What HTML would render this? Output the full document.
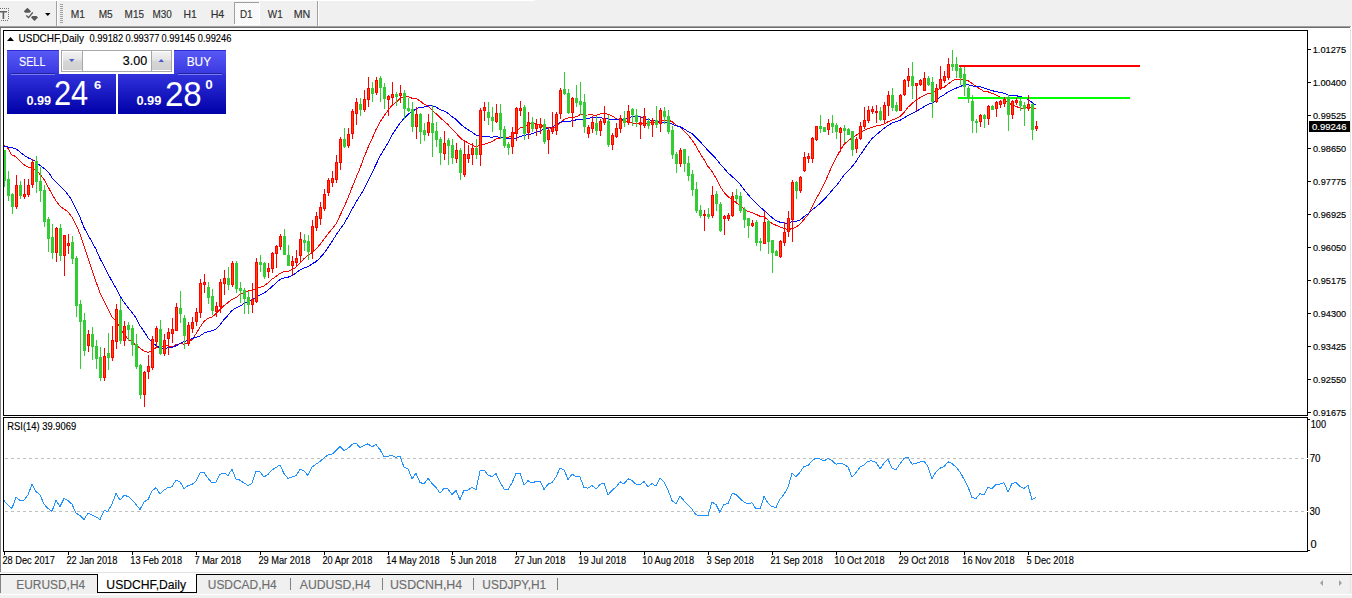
<!DOCTYPE html>
<html><head><meta charset="utf-8"><style>
html,body{margin:0;padding:0;width:1352px;height:598px;overflow:hidden;background:#fff}
svg{position:absolute;left:0;top:0;display:block}
text{font-family:"Liberation Sans",sans-serif}
</style></head><body>
<svg width="1352" height="598" viewBox="0 0 1352 598">
<defs>
<linearGradient id="tabg" x1="0" y1="0" x2="0" y2="1"><stop offset="0" stop-color="#5a5af7"/><stop offset="1" stop-color="#3838e0"/></linearGradient>
<linearGradient id="pang" x1="0" y1="0" x2="0" y2="1"><stop offset="0" stop-color="#3232dc"/><stop offset="1" stop-color="#0000a8"/></linearGradient>
<linearGradient id="btng" x1="0" y1="0" x2="0" y2="1"><stop offset="0" stop-color="#f2f2f2"/><stop offset="0.45" stop-color="#e4e4e4"/><stop offset="0.5" stop-color="#d6d6d6"/><stop offset="1" stop-color="#d0d0d0"/></linearGradient>
<clipPath id="mainclip"><rect x="4" y="31" width="1303" height="384"/></clipPath><clipPath id="rsiclip"><rect x="4" y="418" width="1303" height="133"/></clipPath>
<pattern id="chk" x="0" y="0" width="2" height="2" patternUnits="userSpaceOnUse"><rect width="2" height="2" fill="#f4f4f4"/><rect width="1" height="1" fill="#ffffff"/><rect x="1" y="1" width="1" height="1" fill="#ffffff"/></pattern>
</defs>

<g shape-rendering="crispEdges">
<rect x="0" y="0" width="1352" height="26" fill="#f0f0f0"/>
<rect x="0" y="0" width="535" height="1" fill="#ffffff"/>
<rect x="0" y="26" width="1351" height="1" fill="#a0a0a0"/>
<rect x="0" y="27" width="1350" height="1" fill="#6c6c6c"/>
<rect x="56" y="1" width="1" height="25" fill="#a0a0a0"/><rect x="57" y="1" width="1" height="25" fill="#ffffff"/>
<rect x="317" y="1" width="1" height="25" fill="#a0a0a0"/><rect x="318" y="1" width="1" height="25" fill="#ffffff"/>
<rect x="60" y="4" width="3" height="1" fill="#a0a0a0"/>
<rect x="60" y="6" width="3" height="1" fill="#a0a0a0"/>
<rect x="60" y="8" width="3" height="1" fill="#a0a0a0"/>
<rect x="60" y="10" width="3" height="1" fill="#a0a0a0"/>
<rect x="60" y="12" width="3" height="1" fill="#a0a0a0"/>
<rect x="60" y="14" width="3" height="1" fill="#a0a0a0"/>
<rect x="60" y="16" width="3" height="1" fill="#a0a0a0"/>
<rect x="60" y="18" width="3" height="1" fill="#a0a0a0"/>
<rect x="60" y="20" width="3" height="1" fill="#a0a0a0"/>
<rect x="60" y="22" width="3" height="1" fill="#a0a0a0"/>
<rect x="234" y="2" width="26" height="23" fill="#ffffff"/>
<rect x="235" y="3" width="24" height="21" fill="url(#chk)"/>
<rect x="234" y="2" width="25" height="1" fill="#a0a0a0"/><rect x="234" y="2" width="1" height="22" fill="#a0a0a0"/>
<rect x="0" y="8" width="1" height="1" fill="#707070"/>
<rect x="2" y="8" width="1" height="1" fill="#707070"/>
<rect x="4" y="8" width="1" height="1" fill="#707070"/>
<rect x="6" y="8" width="1" height="1" fill="#707070"/>
<rect x="8" y="8" width="1" height="1" fill="#707070"/>
<rect x="1" y="20" width="1" height="1" fill="#707070"/>
<rect x="3" y="20" width="1" height="1" fill="#707070"/>
<rect x="5" y="20" width="1" height="1" fill="#707070"/>
<rect x="7" y="20" width="1" height="1" fill="#707070"/>
<rect x="8" y="10" width="1" height="1" fill="#707070"/>
<rect x="8" y="12" width="1" height="1" fill="#707070"/>
<rect x="8" y="14" width="1" height="1" fill="#707070"/>
<rect x="8" y="16" width="1" height="1" fill="#707070"/>
<rect x="8" y="18" width="1" height="1" fill="#707070"/>
</g>
<path d="M0 11h7v1.6H4.2V19H2.6v-6.4H0z" fill="#606060"/>
<path d="M23.8 11.2 L27.4 7.8 L31 11.2 L29.6 12.7 H25.2Z" fill="#585858"/>
<path d="M31 17.6 L32.4 16 H36.5 L38 17.6 L34.5 21 Z" fill="#585858"/>
<path d="M26.3 15.5 L28.6 17.6 L32.8 12.4" stroke="#585858" stroke-width="1.4" fill="none"/>
<path d="M45 13 H50.5 L47.75 16 Z" fill="#000"/>
<text transform="translate(70.78,18.10) scale(0.9724,1)" font-size="10.50" stroke="#303030" stroke-width="0.15" fill="#303030" >M1</text>
<text transform="translate(98.69,18.10) scale(0.9648,1)" font-size="10.50" stroke="#303030" stroke-width="0.15" fill="#303030" >M5</text>
<text transform="translate(124.60,18.10) scale(0.9473,1)" font-size="10.50" stroke="#303030" stroke-width="0.15" fill="#303030" >M15</text>
<text transform="translate(152.50,18.10) scale(0.9473,1)" font-size="10.50" stroke="#303030" stroke-width="0.15" fill="#303030" >M30</text>
<text transform="translate(183.47,18.10) scale(0.9916,1)" font-size="10.50" stroke="#303030" stroke-width="0.15" fill="#303030" >H1</text>
<text transform="translate(210.65,18.10) scale(1.0153,1)" font-size="10.50" stroke="#303030" stroke-width="0.15" fill="#303030" >H4</text>
<text transform="translate(239.91,18.10) scale(0.9420,1)" font-size="10.50" stroke="#303030" stroke-width="0.15" fill="#303030" >D1</text>
<text transform="translate(267.80,18.10) scale(0.9495,1)" font-size="10.50" stroke="#303030" stroke-width="0.15" fill="#303030" >W1</text>
<text transform="translate(293.64,18.10) scale(1.0179,1)" font-size="10.50" stroke="#303030" stroke-width="0.15" fill="#303030" >MN</text>
<g shape-rendering="crispEdges">
<rect x="0" y="28" width="1" height="544" fill="#828282"/>
<rect x="1350" y="28" width="1" height="545" fill="#e3e3e3"/>
<rect x="3.5" y="30.5" width="1304" height="385" fill="none" stroke="#000" stroke-width="1"/>
<rect x="3.5" y="417.5" width="1304" height="134" fill="none" stroke="#000" stroke-width="1"/>
<rect x="1308" y="49" width="3" height="1" fill="#000"/>
<rect x="1308" y="82" width="3" height="1" fill="#000"/>
<rect x="1308" y="115" width="3" height="1" fill="#000"/>
<rect x="1308" y="148" width="3" height="1" fill="#000"/>
<rect x="1308" y="181" width="3" height="1" fill="#000"/>
<rect x="1308" y="214" width="3" height="1" fill="#000"/>
<rect x="1308" y="247" width="3" height="1" fill="#000"/>
<rect x="1308" y="280" width="3" height="1" fill="#000"/>
<rect x="1308" y="313" width="3" height="1" fill="#000"/>
<rect x="1308" y="346" width="3" height="1" fill="#000"/>
<rect x="1308" y="379" width="3" height="1" fill="#000"/>
<rect x="1308" y="412" width="3" height="1" fill="#000"/>
</g>
<text transform="translate(1312.65,53.10) scale(0.9638,1)" font-size="9.64" stroke="#000" stroke-width="0.15" fill="#000" >1.01275</text>
<text transform="translate(1312.65,86.10) scale(0.9638,1)" font-size="9.64" stroke="#000" stroke-width="0.15" fill="#000" >1.00400</text>
<text transform="translate(1313.02,119.10) scale(0.9530,1)" font-size="9.64" stroke="#000" stroke-width="0.15" fill="#000" >0.99525</text>
<text transform="translate(1313.02,152.10) scale(0.9530,1)" font-size="9.64" stroke="#000" stroke-width="0.15" fill="#000" >0.98650</text>
<text transform="translate(1313.02,185.10) scale(0.9530,1)" font-size="9.64" stroke="#000" stroke-width="0.15" fill="#000" >0.97775</text>
<text transform="translate(1313.02,218.10) scale(0.9530,1)" font-size="9.64" stroke="#000" stroke-width="0.15" fill="#000" >0.96925</text>
<text transform="translate(1313.02,251.10) scale(0.9530,1)" font-size="9.64" stroke="#000" stroke-width="0.15" fill="#000" >0.96050</text>
<text transform="translate(1313.02,284.10) scale(0.9530,1)" font-size="9.64" stroke="#000" stroke-width="0.15" fill="#000" >0.95175</text>
<text transform="translate(1313.02,317.10) scale(0.9530,1)" font-size="9.64" stroke="#000" stroke-width="0.15" fill="#000" >0.94300</text>
<text transform="translate(1313.02,350.10) scale(0.9530,1)" font-size="9.64" stroke="#000" stroke-width="0.15" fill="#000" >0.93425</text>
<text transform="translate(1313.02,383.10) scale(0.9530,1)" font-size="9.64" stroke="#000" stroke-width="0.15" fill="#000" >0.92550</text>
<text transform="translate(1313.02,416.10) scale(0.9530,1)" font-size="9.64" stroke="#000" stroke-width="0.15" fill="#000" >0.91675</text>
<rect x="1309" y="121" width="41" height="11" fill="#000" shape-rendering="crispEdges"/>
<text transform="translate(1312.01,129.90) scale(0.9910,1)" font-size="9.64" stroke="#fff" stroke-width="0.15" fill="#fff" >0.99246</text>
<g clip-path="url(#mainclip)">
<polyline points="4.0,145.3 7.5,147.5 11.7,155.0 15.0,156.2 18.8,159.6 24.1,164.8 28.6,167.5 30.8,167.5 34.6,169.7 38.4,172.4 44.4,179.9 51.2,192.7 56.0,200.8 60.0,206.1 64.0,209.0 68.0,211.7 72.0,217.0 76.0,224.8 80.0,233.9 84.0,245.6 88.0,257.9 92.0,269.7 96.0,281.8 100.0,292.9 104.0,301.2 108.0,308.8 112.0,316.8 116.0,320.7 120.0,328.2 124.0,334.0 128.0,339.1 132.0,341.9 136.0,345.1 140.0,348.2 144.0,351.0 148.0,352.4 152.0,351.0 156.0,347.5 160.0,347.3 164.0,346.1 168.0,345.5 172.0,347.0 176.0,344.6 180.0,343.7 184.0,344.1 188.0,342.8 192.0,339.6 196.0,333.8 200.0,327.3 204.0,321.3 208.0,318.3 212.0,317.0 216.0,313.7 220.0,309.6 224.0,305.7 228.0,302.5 232.0,299.3 236.0,297.6 240.0,294.3 244.0,292.4 248.0,291.1 252.0,290.2 256.0,288.7 260.0,287.4 264.0,285.9 268.0,282.9 272.0,279.1 276.0,276.5 280.0,273.5 284.0,271.4 288.0,271.6 292.0,269.6 296.0,267.3 300.0,263.1 304.0,258.7 308.0,255.3 312.0,252.7 316.0,249.3 320.0,244.4 324.0,239.1 328.0,233.9 332.0,229.1 336.0,223.8 340.0,215.6 344.0,207.1 348.0,198.0 352.0,187.5 356.0,177.8 360.0,168.3 364.0,157.4 368.0,147.6 372.0,138.7 376.0,129.6 380.0,122.0 384.0,116.1 388.0,110.3 392.0,105.4 396.0,102.3 400.0,98.5 404.0,96.6 408.0,96.5 412.0,98.2 416.0,98.6 420.0,100.9 424.0,104.1 428.0,106.2 432.0,110.0 436.0,113.7 440.0,117.6 444.0,121.0 448.0,124.6 452.0,129.0 456.0,133.1 460.0,137.7 464.0,140.8 468.0,142.8 472.0,145.2 476.0,146.9 480.0,145.2 484.0,144.2 488.0,143.1 492.0,141.7 496.0,138.9 500.0,137.9 504.0,137.9 508.0,137.2 512.0,135.9 516.0,131.3 520.0,128.1 524.0,126.5 528.0,124.7 532.0,122.8 536.0,123.8 540.0,124.9 544.0,126.6 548.0,127.4 552.0,128.4 556.0,127.3 560.0,123.3 564.0,119.4 568.0,118.0 572.0,117.3 576.0,116.9 580.0,114.8 584.0,115.1 588.0,115.0 592.0,114.9 596.0,115.4 600.0,113.9 604.0,113.0 608.0,114.3 612.0,115.8 616.0,118.5 620.0,120.3 624.0,121.0 628.0,122.0 632.0,122.8 636.0,124.1 640.0,123.8 644.0,123.0 648.0,123.2 652.0,122.5 656.0,122.7 660.0,122.2 664.0,120.2 668.0,119.9 672.0,121.7 676.0,125.0 680.0,127.0 684.0,130.7 688.0,135.0 692.0,139.9 696.0,146.1 700.0,153.2 704.0,159.5 708.0,166.4 712.0,171.5 716.0,178.1 720.0,186.2 724.0,192.3 728.0,196.7 732.0,199.1 736.0,202.5 740.0,205.8 744.0,209.0 748.0,211.5 752.0,212.4 756.0,214.3 760.0,216.3 764.0,216.7 768.0,220.0 772.0,223.5 776.0,225.2 780.0,227.0 784.0,228.2 788.0,229.7 792.0,228.6 796.0,227.2 800.0,224.3 804.0,219.5 808.0,214.7 812.0,207.3 816.0,199.0 820.0,192.3 824.0,184.4 828.0,175.2 832.0,166.0 836.0,158.2 840.0,150.8 844.0,144.5 848.0,141.0 852.0,138.0 856.0,135.3 860.0,133.1 864.0,130.6 868.0,128.6 872.0,127.3 876.0,126.1 880.0,125.3 884.0,124.0 888.0,121.8 892.0,120.1 896.0,118.8 900.0,116.4 904.0,112.5 908.0,107.3 912.0,103.5 916.0,100.4 920.0,97.6 924.0,95.3 928.0,93.5 932.0,92.8 936.0,90.5 940.0,88.7 944.0,87.3 948.0,84.1 952.0,81.0 956.0,79.2 960.0,79.0 964.0,79.7 968.0,80.7 972.0,83.3 976.0,86.4 980.0,89.0 984.0,91.4 988.0,91.8 992.0,93.3 996.0,94.9 1000.0,96.8 1004.0,99.3 1008.0,102.7 1012.0,104.9 1016.0,106.5 1020.0,107.8 1024.0,108.5 1028.0,107.4 1032.0,107.8 1036.0,108.6" fill="none" stroke="#ff0000" stroke-width="1" shape-rendering="crispEdges"/>
<polyline points="4.0,146.4 10.5,147.5 14.3,148.3 18.0,150.2 21.8,153.5 25.6,156.2 29.3,158.4 33.9,160.3 38.4,164.1 44.4,168.6 49.4,173.4 52.0,178.0 66.1,192.1 71.4,199.5 80.1,217.5 84.0,227.5 88.0,234.9 92.0,242.1 96.0,249.3 100.0,258.5 104.0,266.1 108.0,273.9 112.0,281.3 116.0,288.3 120.0,295.9 124.0,302.3 128.0,307.5 132.0,312.5 136.0,317.9 140.0,325.8 144.0,331.4 148.0,337.7 152.0,342.2 156.0,345.5 160.0,347.8 164.0,348.7 168.0,347.9 172.0,347.6 176.0,345.8 180.0,343.6 184.0,341.6 188.0,340.2 192.0,338.5 196.0,337.2 200.0,335.9 204.0,333.1 208.0,331.7 212.0,330.8 216.0,329.0 220.0,325.0 224.0,319.5 228.0,315.3 232.0,310.4 236.0,308.0 240.0,306.2 244.0,303.5 248.0,301.8 252.0,300.3 256.0,297.1 260.0,295.0 264.0,293.2 268.0,290.0 272.0,286.6 276.0,283.0 280.0,279.4 284.0,278.0 288.0,277.2 292.0,275.5 296.0,273.0 300.0,269.8 304.0,267.9 308.0,266.6 312.0,263.9 316.0,261.7 320.0,257.8 324.0,253.2 328.0,247.6 332.0,241.6 336.0,235.1 340.0,229.3 344.0,223.7 348.0,216.9 352.0,209.4 356.0,202.3 360.0,195.7 364.0,189.2 368.0,181.3 372.0,173.1 376.0,164.5 380.0,156.3 384.0,149.6 388.0,142.7 392.0,135.2 396.0,129.0 400.0,123.1 404.0,118.4 408.0,114.4 412.0,111.8 416.0,108.8 420.0,107.3 424.0,107.0 428.0,105.9 432.0,105.8 436.0,107.1 440.0,109.5 444.0,111.1 448.0,113.3 452.0,116.6 456.0,119.3 460.0,123.7 464.0,126.9 468.0,129.6 472.0,132.1 476.0,135.0 480.0,135.6 484.0,136.3 488.0,136.8 492.0,137.2 496.0,136.6 500.0,137.3 504.0,138.0 508.0,138.6 512.0,139.1 516.0,138.0 520.0,136.5 524.0,135.6 528.0,134.6 532.0,133.8 536.0,132.2 540.0,130.9 544.0,129.4 548.0,128.3 552.0,127.0 556.0,125.3 560.0,122.3 564.0,121.4 568.0,121.7 572.0,120.8 576.0,119.9 580.0,119.5 584.0,119.4 588.0,118.5 592.0,117.3 596.0,117.2 600.0,117.8 604.0,118.3 608.0,118.8 612.0,119.4 616.0,119.4 620.0,119.1 624.0,119.1 628.0,117.6 632.0,116.9 636.0,116.6 640.0,117.0 644.0,118.3 648.0,119.8 652.0,120.2 656.0,121.4 660.0,121.8 664.0,122.4 668.0,122.6 672.0,123.9 676.0,125.8 680.0,126.8 684.0,128.8 688.0,131.5 692.0,133.7 696.0,137.3 700.0,141.4 704.0,146.0 708.0,150.4 712.0,154.5 716.0,158.7 720.0,163.9 724.0,168.3 728.0,173.0 732.0,176.4 736.0,180.1 740.0,184.2 744.0,189.4 748.0,194.6 752.0,198.9 756.0,203.1 760.0,206.9 764.0,210.3 768.0,214.0 772.0,217.6 776.0,220.8 780.0,222.2 784.0,223.1 788.0,223.2 792.0,221.6 796.0,221.4 800.0,220.1 804.0,216.7 808.0,213.8 812.0,210.1 816.0,206.8 820.0,203.5 824.0,199.7 828.0,195.1 832.0,190.4 836.0,186.1 840.0,180.7 844.0,175.3 848.0,171.1 852.0,166.7 856.0,161.4 860.0,155.3 864.0,149.5 868.0,143.7 872.0,138.5 876.0,135.1 880.0,131.7 884.0,128.3 888.0,125.4 892.0,123.1 896.0,121.7 900.0,120.3 904.0,118.0 908.0,115.4 912.0,113.6 916.0,111.5 920.0,109.1 924.0,106.7 928.0,104.5 932.0,103.0 936.0,100.1 940.0,97.2 944.0,94.8 948.0,92.1 952.0,90.0 956.0,88.2 960.0,86.6 964.0,85.0 968.0,84.7 972.0,85.9 976.0,86.6 980.0,86.8 984.0,87.9 988.0,89.2 992.0,90.7 996.0,91.5 1000.0,92.4 1004.0,93.3 1008.0,95.0 1012.0,95.8 1016.0,95.7 1020.0,96.5 1024.0,97.9 1028.0,99.3 1032.0,102.4 1036.0,105.2" fill="none" stroke="#0000ff" stroke-width="1" shape-rendering="crispEdges"/>
<rect x="959" y="65" width="181" height="2" fill="#ff0000" shape-rendering="crispEdges"/>
<rect x="958" y="97" width="172" height="2" fill="#00ff00" shape-rendering="crispEdges"/>
<g shape-rendering="crispEdges">
<rect x="4" y="150" width="1" height="37" fill="#32cd32"/>
<rect x="3" y="150" width="3" height="31" fill="#32cd32"/>
<rect x="8" y="171" width="1" height="30" fill="#32cd32"/>
<rect x="7" y="179" width="3" height="17" fill="#32cd32"/>
<rect x="12" y="193" width="1" height="21" fill="#32cd32"/>
<rect x="11" y="194" width="3" height="13" fill="#32cd32"/>
<rect x="16" y="175" width="1" height="34" fill="#ff0000"/>
<rect x="15" y="185" width="3" height="22" fill="#ff0000"/>
<rect x="16" y="186" width="1" height="20" fill="#ff4500"/>
<rect x="20" y="181" width="1" height="18" fill="#32cd32"/>
<rect x="19" y="185" width="3" height="11" fill="#32cd32"/>
<rect x="24" y="179" width="1" height="20" fill="#ff0000"/>
<rect x="23" y="194" width="3" height="3" fill="#ff0000"/>
<rect x="24" y="195" width="1" height="1" fill="#ff4500"/>
<rect x="28" y="179" width="1" height="18" fill="#ff0000"/>
<rect x="27" y="185" width="3" height="10" fill="#ff0000"/>
<rect x="28" y="186" width="1" height="8" fill="#ff4500"/>
<rect x="32" y="159" width="1" height="29" fill="#ff0000"/>
<rect x="31" y="162" width="3" height="23" fill="#ff0000"/>
<rect x="32" y="163" width="1" height="21" fill="#ff4500"/>
<rect x="36" y="156" width="1" height="37" fill="#32cd32"/>
<rect x="35" y="161" width="3" height="21" fill="#32cd32"/>
<rect x="40" y="167" width="1" height="35" fill="#32cd32"/>
<rect x="39" y="181" width="3" height="10" fill="#32cd32"/>
<rect x="44" y="185" width="1" height="42" fill="#32cd32"/>
<rect x="43" y="190" width="3" height="32" fill="#32cd32"/>
<rect x="48" y="217" width="1" height="35" fill="#32cd32"/>
<rect x="47" y="219" width="3" height="20" fill="#32cd32"/>
<rect x="52" y="224" width="1" height="35" fill="#32cd32"/>
<rect x="51" y="237" width="3" height="16" fill="#32cd32"/>
<rect x="56" y="227" width="1" height="35" fill="#ff0000"/>
<rect x="55" y="228" width="3" height="25" fill="#ff0000"/>
<rect x="56" y="229" width="1" height="23" fill="#ff4500"/>
<rect x="60" y="224" width="1" height="37" fill="#32cd32"/>
<rect x="59" y="228" width="3" height="28" fill="#32cd32"/>
<rect x="64" y="235" width="1" height="41" fill="#ff0000"/>
<rect x="63" y="235" width="3" height="21" fill="#ff0000"/>
<rect x="64" y="236" width="1" height="19" fill="#ff4500"/>
<rect x="68" y="234" width="1" height="20" fill="#ff0000"/>
<rect x="67" y="243" width="3" height="3" fill="#ff0000"/>
<rect x="68" y="244" width="1" height="1" fill="#ff4500"/>
<rect x="72" y="236" width="1" height="28" fill="#32cd32"/>
<rect x="71" y="242" width="3" height="17" fill="#32cd32"/>
<rect x="76" y="256" width="1" height="61" fill="#32cd32"/>
<rect x="75" y="258" width="3" height="48" fill="#32cd32"/>
<rect x="80" y="300" width="1" height="69" fill="#32cd32"/>
<rect x="79" y="304" width="3" height="18" fill="#32cd32"/>
<rect x="84" y="313" width="1" height="43" fill="#32cd32"/>
<rect x="83" y="320" width="3" height="31" fill="#32cd32"/>
<rect x="88" y="330" width="1" height="22" fill="#ff0000"/>
<rect x="87" y="334" width="3" height="12" fill="#ff0000"/>
<rect x="88" y="335" width="1" height="10" fill="#ff4500"/>
<rect x="92" y="327" width="1" height="33" fill="#32cd32"/>
<rect x="91" y="334" width="3" height="13" fill="#32cd32"/>
<rect x="96" y="340" width="1" height="29" fill="#32cd32"/>
<rect x="95" y="346" width="3" height="13" fill="#32cd32"/>
<rect x="100" y="347" width="1" height="34" fill="#32cd32"/>
<rect x="99" y="357" width="3" height="21" fill="#32cd32"/>
<rect x="104" y="348" width="1" height="33" fill="#ff0000"/>
<rect x="103" y="356" width="3" height="22" fill="#ff0000"/>
<rect x="104" y="357" width="1" height="20" fill="#ff4500"/>
<rect x="108" y="333" width="1" height="37" fill="#32cd32"/>
<rect x="107" y="353" width="3" height="5" fill="#32cd32"/>
<rect x="112" y="326" width="1" height="35" fill="#ff0000"/>
<rect x="111" y="340" width="3" height="18" fill="#ff0000"/>
<rect x="112" y="341" width="1" height="16" fill="#ff4500"/>
<rect x="116" y="304" width="1" height="45" fill="#ff0000"/>
<rect x="115" y="309" width="3" height="33" fill="#ff0000"/>
<rect x="116" y="310" width="1" height="31" fill="#ff4500"/>
<rect x="120" y="298" width="1" height="46" fill="#32cd32"/>
<rect x="119" y="310" width="3" height="31" fill="#32cd32"/>
<rect x="124" y="321" width="1" height="25" fill="#ff0000"/>
<rect x="123" y="326" width="3" height="15" fill="#ff0000"/>
<rect x="124" y="327" width="1" height="13" fill="#ff4500"/>
<rect x="128" y="322" width="1" height="19" fill="#32cd32"/>
<rect x="127" y="325" width="3" height="5" fill="#32cd32"/>
<rect x="132" y="325" width="1" height="31" fill="#32cd32"/>
<rect x="131" y="328" width="3" height="17" fill="#32cd32"/>
<rect x="136" y="334" width="1" height="35" fill="#32cd32"/>
<rect x="135" y="344" width="3" height="23" fill="#32cd32"/>
<rect x="140" y="364" width="1" height="35" fill="#32cd32"/>
<rect x="139" y="365" width="3" height="30" fill="#32cd32"/>
<rect x="144" y="371" width="1" height="36" fill="#ff0000"/>
<rect x="143" y="372" width="3" height="23" fill="#ff0000"/>
<rect x="144" y="373" width="1" height="21" fill="#ff4500"/>
<rect x="148" y="355" width="1" height="24" fill="#ff0000"/>
<rect x="147" y="366" width="3" height="6" fill="#ff0000"/>
<rect x="148" y="367" width="1" height="4" fill="#ff4500"/>
<rect x="152" y="336" width="1" height="34" fill="#ff0000"/>
<rect x="151" y="339" width="3" height="29" fill="#ff0000"/>
<rect x="152" y="340" width="1" height="27" fill="#ff4500"/>
<rect x="156" y="326" width="1" height="22" fill="#ff0000"/>
<rect x="155" y="328" width="3" height="14" fill="#ff0000"/>
<rect x="156" y="329" width="1" height="12" fill="#ff4500"/>
<rect x="160" y="320" width="1" height="35" fill="#32cd32"/>
<rect x="159" y="329" width="3" height="25" fill="#32cd32"/>
<rect x="164" y="334" width="1" height="22" fill="#ff0000"/>
<rect x="163" y="340" width="3" height="14" fill="#ff0000"/>
<rect x="164" y="341" width="1" height="12" fill="#ff4500"/>
<rect x="168" y="328" width="1" height="27" fill="#ff0000"/>
<rect x="167" y="332" width="3" height="7" fill="#ff0000"/>
<rect x="168" y="333" width="1" height="5" fill="#ff4500"/>
<rect x="172" y="318" width="1" height="25" fill="#ff0000"/>
<rect x="171" y="329" width="3" height="5" fill="#ff0000"/>
<rect x="172" y="330" width="1" height="3" fill="#ff4500"/>
<rect x="176" y="303" width="1" height="28" fill="#ff0000"/>
<rect x="175" y="307" width="3" height="24" fill="#ff0000"/>
<rect x="176" y="308" width="1" height="22" fill="#ff4500"/>
<rect x="180" y="291" width="1" height="32" fill="#32cd32"/>
<rect x="179" y="308" width="3" height="6" fill="#32cd32"/>
<rect x="184" y="315" width="1" height="34" fill="#32cd32"/>
<rect x="183" y="318" width="3" height="18" fill="#32cd32"/>
<rect x="188" y="322" width="1" height="24" fill="#ff0000"/>
<rect x="187" y="325" width="3" height="19" fill="#ff0000"/>
<rect x="188" y="326" width="1" height="17" fill="#ff4500"/>
<rect x="192" y="317" width="1" height="16" fill="#ff0000"/>
<rect x="191" y="322" width="3" height="7" fill="#ff0000"/>
<rect x="192" y="323" width="1" height="5" fill="#ff4500"/>
<rect x="196" y="308" width="1" height="18" fill="#ff0000"/>
<rect x="195" y="312" width="3" height="10" fill="#ff0000"/>
<rect x="196" y="313" width="1" height="8" fill="#ff4500"/>
<rect x="200" y="279" width="1" height="39" fill="#ff0000"/>
<rect x="199" y="283" width="3" height="30" fill="#ff0000"/>
<rect x="200" y="284" width="1" height="28" fill="#ff4500"/>
<rect x="204" y="274" width="1" height="19" fill="#ff0000"/>
<rect x="203" y="282" width="3" height="3" fill="#ff0000"/>
<rect x="204" y="283" width="1" height="1" fill="#ff4500"/>
<rect x="208" y="282" width="1" height="22" fill="#32cd32"/>
<rect x="207" y="287" width="3" height="11" fill="#32cd32"/>
<rect x="212" y="289" width="1" height="26" fill="#32cd32"/>
<rect x="211" y="296" width="3" height="15" fill="#32cd32"/>
<rect x="216" y="302" width="1" height="15" fill="#ff0000"/>
<rect x="215" y="306" width="3" height="6" fill="#ff0000"/>
<rect x="216" y="307" width="1" height="4" fill="#ff4500"/>
<rect x="220" y="279" width="1" height="34" fill="#ff0000"/>
<rect x="219" y="282" width="3" height="25" fill="#ff0000"/>
<rect x="220" y="283" width="1" height="23" fill="#ff4500"/>
<rect x="224" y="270" width="1" height="25" fill="#ff0000"/>
<rect x="223" y="278" width="3" height="6" fill="#ff0000"/>
<rect x="224" y="279" width="1" height="4" fill="#ff4500"/>
<rect x="228" y="267" width="1" height="23" fill="#32cd32"/>
<rect x="227" y="278" width="3" height="7" fill="#32cd32"/>
<rect x="232" y="261" width="1" height="26" fill="#ff0000"/>
<rect x="231" y="263" width="3" height="22" fill="#ff0000"/>
<rect x="232" y="264" width="1" height="20" fill="#ff4500"/>
<rect x="236" y="261" width="1" height="32" fill="#32cd32"/>
<rect x="235" y="263" width="3" height="26" fill="#32cd32"/>
<rect x="240" y="282" width="1" height="21" fill="#32cd32"/>
<rect x="239" y="288" width="3" height="3" fill="#32cd32"/>
<rect x="244" y="288" width="1" height="26" fill="#32cd32"/>
<rect x="243" y="290" width="3" height="9" fill="#32cd32"/>
<rect x="248" y="291" width="1" height="23" fill="#32cd32"/>
<rect x="247" y="297" width="3" height="8" fill="#32cd32"/>
<rect x="252" y="283" width="1" height="30" fill="#ff0000"/>
<rect x="251" y="299" width="3" height="6" fill="#ff0000"/>
<rect x="252" y="300" width="1" height="4" fill="#ff4500"/>
<rect x="256" y="258" width="1" height="45" fill="#ff0000"/>
<rect x="255" y="262" width="3" height="40" fill="#ff0000"/>
<rect x="256" y="263" width="1" height="38" fill="#ff4500"/>
<rect x="260" y="255" width="1" height="17" fill="#32cd32"/>
<rect x="259" y="262" width="3" height="3" fill="#32cd32"/>
<rect x="264" y="262" width="1" height="17" fill="#32cd32"/>
<rect x="263" y="263" width="3" height="14" fill="#32cd32"/>
<rect x="268" y="263" width="1" height="15" fill="#ff0000"/>
<rect x="267" y="268" width="3" height="4" fill="#ff0000"/>
<rect x="268" y="269" width="1" height="2" fill="#ff4500"/>
<rect x="272" y="252" width="1" height="21" fill="#ff0000"/>
<rect x="271" y="253" width="3" height="16" fill="#ff0000"/>
<rect x="272" y="254" width="1" height="14" fill="#ff4500"/>
<rect x="276" y="245" width="1" height="23" fill="#ff0000"/>
<rect x="275" y="246" width="3" height="8" fill="#ff0000"/>
<rect x="276" y="247" width="1" height="6" fill="#ff4500"/>
<rect x="280" y="234" width="1" height="16" fill="#ff0000"/>
<rect x="279" y="236" width="3" height="11" fill="#ff0000"/>
<rect x="280" y="237" width="1" height="9" fill="#ff4500"/>
<rect x="284" y="229" width="1" height="26" fill="#32cd32"/>
<rect x="283" y="236" width="3" height="19" fill="#32cd32"/>
<rect x="288" y="245" width="1" height="21" fill="#32cd32"/>
<rect x="287" y="255" width="3" height="11" fill="#32cd32"/>
<rect x="292" y="256" width="1" height="19" fill="#ff0000"/>
<rect x="291" y="261" width="3" height="5" fill="#ff0000"/>
<rect x="292" y="262" width="1" height="3" fill="#ff4500"/>
<rect x="296" y="250" width="1" height="16" fill="#ff0000"/>
<rect x="295" y="258" width="3" height="5" fill="#ff0000"/>
<rect x="296" y="259" width="1" height="3" fill="#ff4500"/>
<rect x="300" y="232" width="1" height="30" fill="#ff0000"/>
<rect x="299" y="239" width="3" height="17" fill="#ff0000"/>
<rect x="300" y="240" width="1" height="15" fill="#ff4500"/>
<rect x="304" y="234" width="1" height="17" fill="#32cd32"/>
<rect x="303" y="240" width="3" height="3" fill="#32cd32"/>
<rect x="308" y="235" width="1" height="25" fill="#32cd32"/>
<rect x="307" y="241" width="3" height="11" fill="#32cd32"/>
<rect x="312" y="220" width="1" height="39" fill="#ff0000"/>
<rect x="311" y="226" width="3" height="26" fill="#ff0000"/>
<rect x="312" y="227" width="1" height="24" fill="#ff4500"/>
<rect x="316" y="212" width="1" height="19" fill="#ff0000"/>
<rect x="315" y="216" width="3" height="12" fill="#ff0000"/>
<rect x="316" y="217" width="1" height="10" fill="#ff4500"/>
<rect x="320" y="202" width="1" height="23" fill="#ff0000"/>
<rect x="319" y="207" width="3" height="12" fill="#ff0000"/>
<rect x="320" y="208" width="1" height="10" fill="#ff4500"/>
<rect x="324" y="189" width="1" height="22" fill="#ff0000"/>
<rect x="323" y="194" width="3" height="15" fill="#ff0000"/>
<rect x="324" y="195" width="1" height="13" fill="#ff4500"/>
<rect x="328" y="178" width="1" height="18" fill="#ff0000"/>
<rect x="327" y="180" width="3" height="13" fill="#ff0000"/>
<rect x="328" y="181" width="1" height="11" fill="#ff4500"/>
<rect x="332" y="171" width="1" height="16" fill="#ff0000"/>
<rect x="331" y="178" width="3" height="5" fill="#ff0000"/>
<rect x="332" y="179" width="1" height="3" fill="#ff4500"/>
<rect x="336" y="155" width="1" height="28" fill="#ff0000"/>
<rect x="335" y="162" width="3" height="18" fill="#ff0000"/>
<rect x="336" y="163" width="1" height="16" fill="#ff4500"/>
<rect x="340" y="137" width="1" height="33" fill="#ff0000"/>
<rect x="339" y="139" width="3" height="24" fill="#ff0000"/>
<rect x="340" y="140" width="1" height="22" fill="#ff4500"/>
<rect x="344" y="128" width="1" height="20" fill="#32cd32"/>
<rect x="343" y="139" width="3" height="8" fill="#32cd32"/>
<rect x="348" y="128" width="1" height="20" fill="#ff0000"/>
<rect x="347" y="134" width="3" height="12" fill="#ff0000"/>
<rect x="348" y="135" width="1" height="10" fill="#ff4500"/>
<rect x="352" y="109" width="1" height="30" fill="#ff0000"/>
<rect x="351" y="111" width="3" height="23" fill="#ff0000"/>
<rect x="352" y="112" width="1" height="21" fill="#ff4500"/>
<rect x="356" y="98" width="1" height="27" fill="#ff0000"/>
<rect x="355" y="102" width="3" height="12" fill="#ff0000"/>
<rect x="356" y="103" width="1" height="10" fill="#ff4500"/>
<rect x="360" y="98" width="1" height="18" fill="#32cd32"/>
<rect x="359" y="104" width="3" height="6" fill="#32cd32"/>
<rect x="364" y="90" width="1" height="22" fill="#ff0000"/>
<rect x="363" y="99" width="3" height="11" fill="#ff0000"/>
<rect x="364" y="100" width="1" height="9" fill="#ff4500"/>
<rect x="368" y="77" width="1" height="30" fill="#ff0000"/>
<rect x="367" y="88" width="3" height="12" fill="#ff0000"/>
<rect x="368" y="89" width="1" height="10" fill="#ff4500"/>
<rect x="372" y="82" width="1" height="20" fill="#32cd32"/>
<rect x="371" y="88" width="3" height="6" fill="#32cd32"/>
<rect x="376" y="77" width="1" height="18" fill="#ff0000"/>
<rect x="375" y="80" width="3" height="13" fill="#ff0000"/>
<rect x="376" y="81" width="1" height="11" fill="#ff4500"/>
<rect x="380" y="76" width="1" height="26" fill="#32cd32"/>
<rect x="379" y="78" width="3" height="10" fill="#32cd32"/>
<rect x="384" y="83" width="1" height="26" fill="#32cd32"/>
<rect x="383" y="87" width="3" height="12" fill="#32cd32"/>
<rect x="388" y="95" width="1" height="21" fill="#ff0000"/>
<rect x="387" y="96" width="3" height="4" fill="#ff0000"/>
<rect x="388" y="97" width="1" height="2" fill="#ff4500"/>
<rect x="392" y="82" width="1" height="24" fill="#ff0000"/>
<rect x="391" y="94" width="3" height="4" fill="#ff0000"/>
<rect x="392" y="95" width="1" height="2" fill="#ff4500"/>
<rect x="396" y="92" width="1" height="14" fill="#32cd32"/>
<rect x="395" y="94" width="3" height="3" fill="#32cd32"/>
<rect x="400" y="85" width="1" height="18" fill="#ff0000"/>
<rect x="399" y="93" width="3" height="3" fill="#ff0000"/>
<rect x="400" y="94" width="1" height="1" fill="#ff4500"/>
<rect x="404" y="90" width="1" height="29" fill="#32cd32"/>
<rect x="403" y="93" width="3" height="16" fill="#32cd32"/>
<rect x="408" y="98" width="1" height="14" fill="#32cd32"/>
<rect x="407" y="108" width="3" height="3" fill="#32cd32"/>
<rect x="412" y="102" width="1" height="30" fill="#32cd32"/>
<rect x="411" y="109" width="3" height="18" fill="#32cd32"/>
<rect x="416" y="107" width="1" height="32" fill="#ff0000"/>
<rect x="415" y="114" width="3" height="13" fill="#ff0000"/>
<rect x="416" y="115" width="1" height="11" fill="#ff4500"/>
<rect x="420" y="113" width="1" height="31" fill="#32cd32"/>
<rect x="419" y="114" width="3" height="18" fill="#32cd32"/>
<rect x="424" y="123" width="1" height="18" fill="#32cd32"/>
<rect x="423" y="130" width="3" height="5" fill="#32cd32"/>
<rect x="428" y="114" width="1" height="22" fill="#ff0000"/>
<rect x="427" y="122" width="3" height="11" fill="#ff0000"/>
<rect x="428" y="123" width="1" height="9" fill="#ff4500"/>
<rect x="432" y="105" width="1" height="52" fill="#32cd32"/>
<rect x="431" y="123" width="3" height="10" fill="#32cd32"/>
<rect x="436" y="122" width="1" height="25" fill="#32cd32"/>
<rect x="435" y="131" width="3" height="9" fill="#32cd32"/>
<rect x="440" y="137" width="1" height="28" fill="#32cd32"/>
<rect x="439" y="139" width="3" height="14" fill="#32cd32"/>
<rect x="444" y="131" width="1" height="29" fill="#ff0000"/>
<rect x="443" y="143" width="3" height="11" fill="#ff0000"/>
<rect x="444" y="144" width="1" height="9" fill="#ff4500"/>
<rect x="448" y="138" width="1" height="27" fill="#32cd32"/>
<rect x="447" y="140" width="3" height="6" fill="#32cd32"/>
<rect x="452" y="139" width="1" height="25" fill="#32cd32"/>
<rect x="451" y="145" width="3" height="13" fill="#32cd32"/>
<rect x="456" y="143" width="1" height="20" fill="#ff0000"/>
<rect x="455" y="150" width="3" height="9" fill="#ff0000"/>
<rect x="456" y="151" width="1" height="7" fill="#ff4500"/>
<rect x="460" y="148" width="1" height="32" fill="#32cd32"/>
<rect x="459" y="150" width="3" height="23" fill="#32cd32"/>
<rect x="464" y="142" width="1" height="35" fill="#ff0000"/>
<rect x="463" y="154" width="3" height="21" fill="#ff0000"/>
<rect x="464" y="155" width="1" height="19" fill="#ff4500"/>
<rect x="468" y="145" width="1" height="18" fill="#ff0000"/>
<rect x="467" y="154" width="3" height="5" fill="#ff0000"/>
<rect x="468" y="155" width="1" height="3" fill="#ff4500"/>
<rect x="472" y="143" width="1" height="22" fill="#ff0000"/>
<rect x="471" y="148" width="3" height="7" fill="#ff0000"/>
<rect x="472" y="149" width="1" height="5" fill="#ff4500"/>
<rect x="476" y="139" width="1" height="20" fill="#32cd32"/>
<rect x="475" y="148" width="3" height="7" fill="#32cd32"/>
<rect x="480" y="108" width="1" height="58" fill="#ff0000"/>
<rect x="479" y="110" width="3" height="45" fill="#ff0000"/>
<rect x="480" y="111" width="1" height="43" fill="#ff4500"/>
<rect x="484" y="102" width="1" height="19" fill="#ff0000"/>
<rect x="483" y="107" width="3" height="4" fill="#ff0000"/>
<rect x="484" y="108" width="1" height="2" fill="#ff4500"/>
<rect x="488" y="102" width="1" height="23" fill="#32cd32"/>
<rect x="487" y="112" width="3" height="6" fill="#32cd32"/>
<rect x="492" y="107" width="1" height="25" fill="#32cd32"/>
<rect x="491" y="117" width="3" height="4" fill="#32cd32"/>
<rect x="496" y="104" width="1" height="19" fill="#ff0000"/>
<rect x="495" y="113" width="3" height="9" fill="#ff0000"/>
<rect x="496" y="114" width="1" height="7" fill="#ff4500"/>
<rect x="500" y="104" width="1" height="35" fill="#32cd32"/>
<rect x="499" y="113" width="3" height="17" fill="#32cd32"/>
<rect x="504" y="126" width="1" height="22" fill="#32cd32"/>
<rect x="503" y="129" width="3" height="17" fill="#32cd32"/>
<rect x="508" y="142" width="1" height="13" fill="#32cd32"/>
<rect x="507" y="144" width="3" height="4" fill="#32cd32"/>
<rect x="512" y="127" width="1" height="27" fill="#ff0000"/>
<rect x="511" y="132" width="3" height="15" fill="#ff0000"/>
<rect x="512" y="133" width="1" height="13" fill="#ff4500"/>
<rect x="516" y="107" width="1" height="34" fill="#ff0000"/>
<rect x="515" y="108" width="3" height="26" fill="#ff0000"/>
<rect x="516" y="109" width="1" height="24" fill="#ff4500"/>
<rect x="520" y="101" width="1" height="15" fill="#ff0000"/>
<rect x="519" y="108" width="3" height="3" fill="#ff0000"/>
<rect x="520" y="109" width="1" height="1" fill="#ff4500"/>
<rect x="524" y="105" width="1" height="35" fill="#32cd32"/>
<rect x="523" y="107" width="3" height="27" fill="#32cd32"/>
<rect x="528" y="112" width="1" height="27" fill="#ff0000"/>
<rect x="527" y="122" width="3" height="11" fill="#ff0000"/>
<rect x="528" y="123" width="1" height="9" fill="#ff4500"/>
<rect x="532" y="117" width="1" height="15" fill="#32cd32"/>
<rect x="531" y="122" width="3" height="7" fill="#32cd32"/>
<rect x="536" y="119" width="1" height="17" fill="#ff0000"/>
<rect x="535" y="124" width="3" height="5" fill="#ff0000"/>
<rect x="536" y="125" width="1" height="3" fill="#ff4500"/>
<rect x="540" y="118" width="1" height="16" fill="#ff0000"/>
<rect x="539" y="124" width="3" height="4" fill="#ff0000"/>
<rect x="540" y="125" width="1" height="2" fill="#ff4500"/>
<rect x="544" y="119" width="1" height="25" fill="#32cd32"/>
<rect x="543" y="124" width="3" height="18" fill="#32cd32"/>
<rect x="548" y="128" width="1" height="26" fill="#ff0000"/>
<rect x="547" y="130" width="3" height="10" fill="#ff0000"/>
<rect x="548" y="131" width="1" height="8" fill="#ff4500"/>
<rect x="552" y="112" width="1" height="22" fill="#ff0000"/>
<rect x="551" y="127" width="3" height="5" fill="#ff0000"/>
<rect x="552" y="128" width="1" height="3" fill="#ff4500"/>
<rect x="556" y="112" width="1" height="23" fill="#ff0000"/>
<rect x="555" y="114" width="3" height="17" fill="#ff0000"/>
<rect x="556" y="115" width="1" height="15" fill="#ff4500"/>
<rect x="560" y="88" width="1" height="31" fill="#ff0000"/>
<rect x="559" y="90" width="3" height="24" fill="#ff0000"/>
<rect x="560" y="91" width="1" height="22" fill="#ff4500"/>
<rect x="564" y="72" width="1" height="23" fill="#32cd32"/>
<rect x="563" y="89" width="3" height="5" fill="#32cd32"/>
<rect x="568" y="89" width="1" height="25" fill="#32cd32"/>
<rect x="567" y="93" width="3" height="20" fill="#32cd32"/>
<rect x="572" y="97" width="1" height="30" fill="#ff0000"/>
<rect x="571" y="98" width="3" height="15" fill="#ff0000"/>
<rect x="572" y="99" width="1" height="13" fill="#ff4500"/>
<rect x="576" y="85" width="1" height="22" fill="#32cd32"/>
<rect x="575" y="98" width="3" height="5" fill="#32cd32"/>
<rect x="580" y="82" width="1" height="33" fill="#32cd32"/>
<rect x="579" y="101" width="3" height="4" fill="#32cd32"/>
<rect x="584" y="94" width="1" height="39" fill="#32cd32"/>
<rect x="583" y="102" width="3" height="25" fill="#32cd32"/>
<rect x="588" y="125" width="1" height="13" fill="#ff0000"/>
<rect x="587" y="127" width="3" height="7" fill="#ff0000"/>
<rect x="588" y="128" width="1" height="5" fill="#ff4500"/>
<rect x="592" y="116" width="1" height="17" fill="#ff0000"/>
<rect x="591" y="122" width="3" height="7" fill="#ff0000"/>
<rect x="592" y="123" width="1" height="5" fill="#ff4500"/>
<rect x="596" y="116" width="1" height="19" fill="#32cd32"/>
<rect x="595" y="123" width="3" height="8" fill="#32cd32"/>
<rect x="600" y="119" width="1" height="17" fill="#ff0000"/>
<rect x="599" y="121" width="3" height="10" fill="#ff0000"/>
<rect x="600" y="122" width="1" height="8" fill="#ff4500"/>
<rect x="604" y="106" width="1" height="19" fill="#ff0000"/>
<rect x="603" y="118" width="3" height="5" fill="#ff0000"/>
<rect x="604" y="119" width="1" height="3" fill="#ff4500"/>
<rect x="608" y="115" width="1" height="32" fill="#32cd32"/>
<rect x="607" y="121" width="3" height="24" fill="#32cd32"/>
<rect x="612" y="133" width="1" height="17" fill="#ff0000"/>
<rect x="611" y="135" width="3" height="10" fill="#ff0000"/>
<rect x="612" y="136" width="1" height="8" fill="#ff4500"/>
<rect x="616" y="123" width="1" height="15" fill="#ff0000"/>
<rect x="615" y="128" width="3" height="9" fill="#ff0000"/>
<rect x="616" y="129" width="1" height="7" fill="#ff4500"/>
<rect x="620" y="115" width="1" height="18" fill="#ff0000"/>
<rect x="619" y="118" width="3" height="11" fill="#ff0000"/>
<rect x="620" y="119" width="1" height="9" fill="#ff4500"/>
<rect x="624" y="111" width="1" height="16" fill="#32cd32"/>
<rect x="623" y="118" width="3" height="5" fill="#32cd32"/>
<rect x="628" y="105" width="1" height="20" fill="#ff0000"/>
<rect x="627" y="111" width="3" height="12" fill="#ff0000"/>
<rect x="628" y="112" width="1" height="10" fill="#ff4500"/>
<rect x="632" y="108" width="1" height="18" fill="#32cd32"/>
<rect x="631" y="109" width="3" height="6" fill="#32cd32"/>
<rect x="636" y="109" width="1" height="18" fill="#32cd32"/>
<rect x="635" y="115" width="3" height="7" fill="#32cd32"/>
<rect x="640" y="116" width="1" height="23" fill="#ff0000"/>
<rect x="639" y="122" width="3" height="3" fill="#ff0000"/>
<rect x="640" y="123" width="1" height="1" fill="#ff4500"/>
<rect x="644" y="108" width="1" height="20" fill="#ff0000"/>
<rect x="643" y="116" width="3" height="10" fill="#ff0000"/>
<rect x="644" y="117" width="1" height="8" fill="#ff4500"/>
<rect x="648" y="118" width="1" height="11" fill="#32cd32"/>
<rect x="647" y="121" width="3" height="5" fill="#32cd32"/>
<rect x="652" y="118" width="1" height="19" fill="#ff0000"/>
<rect x="651" y="120" width="3" height="5" fill="#ff0000"/>
<rect x="652" y="121" width="1" height="3" fill="#ff4500"/>
<rect x="656" y="106" width="1" height="22" fill="#32cd32"/>
<rect x="655" y="120" width="3" height="5" fill="#32cd32"/>
<rect x="660" y="108" width="1" height="24" fill="#ff0000"/>
<rect x="659" y="110" width="3" height="14" fill="#ff0000"/>
<rect x="660" y="111" width="1" height="12" fill="#ff4500"/>
<rect x="664" y="107" width="1" height="17" fill="#32cd32"/>
<rect x="663" y="111" width="3" height="6" fill="#32cd32"/>
<rect x="668" y="110" width="1" height="24" fill="#32cd32"/>
<rect x="667" y="116" width="3" height="16" fill="#32cd32"/>
<rect x="672" y="126" width="1" height="33" fill="#32cd32"/>
<rect x="671" y="130" width="3" height="25" fill="#32cd32"/>
<rect x="676" y="152" width="1" height="21" fill="#32cd32"/>
<rect x="675" y="154" width="3" height="10" fill="#32cd32"/>
<rect x="680" y="148" width="1" height="19" fill="#ff0000"/>
<rect x="679" y="150" width="3" height="14" fill="#ff0000"/>
<rect x="680" y="151" width="1" height="12" fill="#ff4500"/>
<rect x="684" y="149" width="1" height="23" fill="#32cd32"/>
<rect x="683" y="149" width="3" height="15" fill="#32cd32"/>
<rect x="688" y="156" width="1" height="25" fill="#32cd32"/>
<rect x="687" y="163" width="3" height="13" fill="#32cd32"/>
<rect x="692" y="170" width="1" height="26" fill="#32cd32"/>
<rect x="691" y="174" width="3" height="16" fill="#32cd32"/>
<rect x="696" y="182" width="1" height="31" fill="#32cd32"/>
<rect x="695" y="189" width="3" height="22" fill="#32cd32"/>
<rect x="700" y="205" width="1" height="13" fill="#32cd32"/>
<rect x="699" y="210" width="3" height="6" fill="#32cd32"/>
<rect x="704" y="210" width="1" height="21" fill="#ff0000"/>
<rect x="703" y="214" width="3" height="2" fill="#ff0000"/>
<rect x="708" y="208" width="1" height="11" fill="#32cd32"/>
<rect x="707" y="214" width="3" height="3" fill="#32cd32"/>
<rect x="712" y="186" width="1" height="32" fill="#ff0000"/>
<rect x="711" y="195" width="3" height="21" fill="#ff0000"/>
<rect x="712" y="196" width="1" height="19" fill="#ff4500"/>
<rect x="716" y="191" width="1" height="20" fill="#32cd32"/>
<rect x="715" y="194" width="3" height="10" fill="#32cd32"/>
<rect x="720" y="202" width="1" height="30" fill="#32cd32"/>
<rect x="719" y="204" width="3" height="27" fill="#32cd32"/>
<rect x="724" y="215" width="1" height="20" fill="#ff0000"/>
<rect x="723" y="216" width="3" height="3" fill="#ff0000"/>
<rect x="724" y="217" width="1" height="1" fill="#ff4500"/>
<rect x="728" y="213" width="1" height="8" fill="#ff0000"/>
<rect x="727" y="215" width="3" height="4" fill="#ff0000"/>
<rect x="728" y="216" width="1" height="2" fill="#ff4500"/>
<rect x="732" y="192" width="1" height="25" fill="#ff0000"/>
<rect x="731" y="196" width="3" height="20" fill="#ff0000"/>
<rect x="732" y="197" width="1" height="18" fill="#ff4500"/>
<rect x="736" y="189" width="1" height="13" fill="#32cd32"/>
<rect x="735" y="195" width="3" height="4" fill="#32cd32"/>
<rect x="740" y="192" width="1" height="21" fill="#32cd32"/>
<rect x="739" y="196" width="3" height="15" fill="#32cd32"/>
<rect x="744" y="207" width="1" height="21" fill="#32cd32"/>
<rect x="743" y="209" width="3" height="11" fill="#32cd32"/>
<rect x="748" y="218" width="1" height="20" fill="#32cd32"/>
<rect x="747" y="218" width="3" height="8" fill="#32cd32"/>
<rect x="752" y="220" width="1" height="7" fill="#ff0000"/>
<rect x="751" y="223" width="3" height="3" fill="#ff0000"/>
<rect x="752" y="224" width="1" height="1" fill="#ff4500"/>
<rect x="756" y="220" width="1" height="26" fill="#32cd32"/>
<rect x="755" y="222" width="3" height="21" fill="#32cd32"/>
<rect x="760" y="238" width="1" height="13" fill="#32cd32"/>
<rect x="759" y="241" width="3" height="2" fill="#32cd32"/>
<rect x="764" y="211" width="1" height="33" fill="#ff0000"/>
<rect x="763" y="222" width="3" height="22" fill="#ff0000"/>
<rect x="764" y="223" width="1" height="20" fill="#ff4500"/>
<rect x="768" y="220" width="1" height="34" fill="#32cd32"/>
<rect x="767" y="221" width="3" height="21" fill="#32cd32"/>
<rect x="772" y="240" width="1" height="33" fill="#32cd32"/>
<rect x="771" y="240" width="3" height="13" fill="#32cd32"/>
<rect x="776" y="250" width="1" height="6" fill="#32cd32"/>
<rect x="775" y="251" width="3" height="5" fill="#32cd32"/>
<rect x="780" y="240" width="1" height="18" fill="#ff0000"/>
<rect x="779" y="241" width="3" height="16" fill="#ff0000"/>
<rect x="780" y="242" width="1" height="14" fill="#ff4500"/>
<rect x="784" y="222" width="1" height="24" fill="#ff0000"/>
<rect x="783" y="232" width="3" height="11" fill="#ff0000"/>
<rect x="784" y="233" width="1" height="9" fill="#ff4500"/>
<rect x="788" y="211" width="1" height="26" fill="#ff0000"/>
<rect x="787" y="218" width="3" height="14" fill="#ff0000"/>
<rect x="788" y="219" width="1" height="12" fill="#ff4500"/>
<rect x="792" y="180" width="1" height="62" fill="#ff0000"/>
<rect x="791" y="182" width="3" height="38" fill="#ff0000"/>
<rect x="792" y="183" width="1" height="36" fill="#ff4500"/>
<rect x="796" y="181" width="1" height="18" fill="#32cd32"/>
<rect x="795" y="182" width="3" height="9" fill="#32cd32"/>
<rect x="800" y="176" width="1" height="17" fill="#ff0000"/>
<rect x="799" y="177" width="3" height="14" fill="#ff0000"/>
<rect x="800" y="178" width="1" height="12" fill="#ff4500"/>
<rect x="804" y="152" width="1" height="20" fill="#ff0000"/>
<rect x="803" y="157" width="3" height="14" fill="#ff0000"/>
<rect x="804" y="158" width="1" height="12" fill="#ff4500"/>
<rect x="808" y="153" width="1" height="10" fill="#ff0000"/>
<rect x="807" y="156" width="3" height="3" fill="#ff0000"/>
<rect x="808" y="157" width="1" height="1" fill="#ff4500"/>
<rect x="812" y="137" width="1" height="26" fill="#ff0000"/>
<rect x="811" y="138" width="3" height="21" fill="#ff0000"/>
<rect x="812" y="139" width="1" height="19" fill="#ff4500"/>
<rect x="816" y="126" width="1" height="15" fill="#ff0000"/>
<rect x="815" y="126" width="3" height="14" fill="#ff0000"/>
<rect x="816" y="127" width="1" height="12" fill="#ff4500"/>
<rect x="820" y="115" width="1" height="18" fill="#32cd32"/>
<rect x="819" y="126" width="3" height="3" fill="#32cd32"/>
<rect x="824" y="127" width="1" height="5" fill="#32cd32"/>
<rect x="823" y="127" width="3" height="5" fill="#32cd32"/>
<rect x="828" y="119" width="1" height="16" fill="#ff0000"/>
<rect x="827" y="123" width="3" height="7" fill="#ff0000"/>
<rect x="828" y="124" width="1" height="5" fill="#ff4500"/>
<rect x="832" y="115" width="1" height="18" fill="#32cd32"/>
<rect x="831" y="123" width="3" height="4" fill="#32cd32"/>
<rect x="836" y="123" width="1" height="16" fill="#32cd32"/>
<rect x="835" y="125" width="3" height="7" fill="#32cd32"/>
<rect x="840" y="127" width="1" height="25" fill="#ff0000"/>
<rect x="839" y="128" width="3" height="5" fill="#ff0000"/>
<rect x="840" y="129" width="1" height="3" fill="#ff4500"/>
<rect x="844" y="125" width="1" height="18" fill="#32cd32"/>
<rect x="843" y="128" width="3" height="3" fill="#32cd32"/>
<rect x="848" y="128" width="1" height="7" fill="#32cd32"/>
<rect x="847" y="129" width="3" height="6" fill="#32cd32"/>
<rect x="852" y="131" width="1" height="25" fill="#32cd32"/>
<rect x="851" y="131" width="3" height="19" fill="#32cd32"/>
<rect x="856" y="137" width="1" height="16" fill="#ff0000"/>
<rect x="855" y="139" width="3" height="10" fill="#ff0000"/>
<rect x="856" y="140" width="1" height="8" fill="#ff4500"/>
<rect x="860" y="122" width="1" height="18" fill="#ff0000"/>
<rect x="859" y="126" width="3" height="13" fill="#ff0000"/>
<rect x="860" y="127" width="1" height="11" fill="#ff4500"/>
<rect x="864" y="107" width="1" height="22" fill="#ff0000"/>
<rect x="863" y="120" width="3" height="7" fill="#ff0000"/>
<rect x="864" y="121" width="1" height="5" fill="#ff4500"/>
<rect x="868" y="106" width="1" height="17" fill="#ff0000"/>
<rect x="867" y="110" width="3" height="11" fill="#ff0000"/>
<rect x="868" y="111" width="1" height="9" fill="#ff4500"/>
<rect x="872" y="106" width="1" height="8" fill="#ff0000"/>
<rect x="871" y="109" width="3" height="3" fill="#ff0000"/>
<rect x="872" y="110" width="1" height="1" fill="#ff4500"/>
<rect x="876" y="105" width="1" height="18" fill="#ff0000"/>
<rect x="875" y="111" width="3" height="2" fill="#ff0000"/>
<rect x="880" y="107" width="1" height="14" fill="#32cd32"/>
<rect x="879" y="111" width="3" height="9" fill="#32cd32"/>
<rect x="884" y="102" width="1" height="21" fill="#ff0000"/>
<rect x="883" y="105" width="3" height="15" fill="#ff0000"/>
<rect x="884" y="106" width="1" height="13" fill="#ff4500"/>
<rect x="888" y="91" width="1" height="25" fill="#ff0000"/>
<rect x="887" y="95" width="3" height="11" fill="#ff0000"/>
<rect x="888" y="96" width="1" height="9" fill="#ff4500"/>
<rect x="892" y="88" width="1" height="23" fill="#32cd32"/>
<rect x="891" y="95" width="3" height="13" fill="#32cd32"/>
<rect x="896" y="102" width="1" height="10" fill="#32cd32"/>
<rect x="895" y="105" width="3" height="6" fill="#32cd32"/>
<rect x="900" y="94" width="1" height="17" fill="#ff0000"/>
<rect x="899" y="95" width="3" height="16" fill="#ff0000"/>
<rect x="900" y="96" width="1" height="14" fill="#ff4500"/>
<rect x="904" y="79" width="1" height="17" fill="#ff0000"/>
<rect x="903" y="80" width="3" height="15" fill="#ff0000"/>
<rect x="904" y="81" width="1" height="13" fill="#ff4500"/>
<rect x="908" y="68" width="1" height="19" fill="#ff0000"/>
<rect x="907" y="76" width="3" height="5" fill="#ff0000"/>
<rect x="908" y="77" width="1" height="3" fill="#ff4500"/>
<rect x="912" y="62" width="1" height="37" fill="#32cd32"/>
<rect x="911" y="76" width="3" height="10" fill="#32cd32"/>
<rect x="916" y="83" width="1" height="28" fill="#ff0000"/>
<rect x="915" y="83" width="3" height="3" fill="#ff0000"/>
<rect x="916" y="84" width="1" height="1" fill="#ff4500"/>
<rect x="920" y="79" width="1" height="7" fill="#ff0000"/>
<rect x="919" y="80" width="3" height="5" fill="#ff0000"/>
<rect x="920" y="81" width="1" height="3" fill="#ff4500"/>
<rect x="924" y="72" width="1" height="19" fill="#ff0000"/>
<rect x="923" y="78" width="3" height="13" fill="#ff0000"/>
<rect x="924" y="79" width="1" height="11" fill="#ff4500"/>
<rect x="928" y="76" width="1" height="10" fill="#32cd32"/>
<rect x="927" y="78" width="3" height="7" fill="#32cd32"/>
<rect x="932" y="77" width="1" height="41" fill="#32cd32"/>
<rect x="931" y="82" width="3" height="20" fill="#32cd32"/>
<rect x="936" y="84" width="1" height="19" fill="#ff0000"/>
<rect x="935" y="88" width="3" height="14" fill="#ff0000"/>
<rect x="936" y="89" width="1" height="12" fill="#ff4500"/>
<rect x="940" y="66" width="1" height="24" fill="#ff0000"/>
<rect x="939" y="79" width="3" height="10" fill="#ff0000"/>
<rect x="940" y="80" width="1" height="8" fill="#ff4500"/>
<rect x="944" y="71" width="1" height="12" fill="#ff0000"/>
<rect x="943" y="76" width="3" height="5" fill="#ff0000"/>
<rect x="944" y="77" width="1" height="3" fill="#ff4500"/>
<rect x="948" y="58" width="1" height="22" fill="#ff0000"/>
<rect x="947" y="64" width="3" height="14" fill="#ff0000"/>
<rect x="948" y="65" width="1" height="12" fill="#ff4500"/>
<rect x="952" y="50" width="1" height="21" fill="#32cd32"/>
<rect x="951" y="64" width="3" height="3" fill="#32cd32"/>
<rect x="956" y="57" width="1" height="21" fill="#32cd32"/>
<rect x="955" y="64" width="3" height="7" fill="#32cd32"/>
<rect x="960" y="67" width="1" height="18" fill="#32cd32"/>
<rect x="959" y="68" width="3" height="10" fill="#32cd32"/>
<rect x="964" y="67" width="1" height="29" fill="#32cd32"/>
<rect x="963" y="74" width="3" height="13" fill="#32cd32"/>
<rect x="968" y="86" width="1" height="17" fill="#32cd32"/>
<rect x="967" y="88" width="3" height="11" fill="#32cd32"/>
<rect x="972" y="95" width="1" height="38" fill="#32cd32"/>
<rect x="971" y="101" width="3" height="20" fill="#32cd32"/>
<rect x="976" y="119" width="1" height="14" fill="#32cd32"/>
<rect x="975" y="121" width="3" height="2" fill="#32cd32"/>
<rect x="980" y="114" width="1" height="13" fill="#ff0000"/>
<rect x="979" y="115" width="3" height="7" fill="#ff0000"/>
<rect x="980" y="116" width="1" height="5" fill="#ff4500"/>
<rect x="984" y="114" width="1" height="14" fill="#32cd32"/>
<rect x="983" y="115" width="3" height="4" fill="#32cd32"/>
<rect x="988" y="105" width="1" height="20" fill="#ff0000"/>
<rect x="987" y="106" width="3" height="13" fill="#ff0000"/>
<rect x="988" y="107" width="1" height="11" fill="#ff4500"/>
<rect x="992" y="105" width="1" height="5" fill="#32cd32"/>
<rect x="991" y="106" width="3" height="4" fill="#32cd32"/>
<rect x="996" y="101" width="1" height="16" fill="#ff0000"/>
<rect x="995" y="102" width="3" height="7" fill="#ff0000"/>
<rect x="996" y="103" width="1" height="5" fill="#ff4500"/>
<rect x="1000" y="100" width="1" height="8" fill="#ff0000"/>
<rect x="999" y="101" width="3" height="4" fill="#ff0000"/>
<rect x="1000" y="102" width="1" height="2" fill="#ff4500"/>
<rect x="1004" y="97" width="1" height="10" fill="#ff0000"/>
<rect x="1003" y="99" width="3" height="5" fill="#ff0000"/>
<rect x="1004" y="100" width="1" height="3" fill="#ff4500"/>
<rect x="1008" y="95" width="1" height="36" fill="#32cd32"/>
<rect x="1007" y="97" width="3" height="18" fill="#32cd32"/>
<rect x="1012" y="100" width="1" height="19" fill="#ff0000"/>
<rect x="1011" y="101" width="3" height="14" fill="#ff0000"/>
<rect x="1012" y="102" width="1" height="12" fill="#ff4500"/>
<rect x="1016" y="98" width="1" height="7" fill="#ff0000"/>
<rect x="1015" y="100" width="3" height="3" fill="#ff0000"/>
<rect x="1016" y="101" width="1" height="1" fill="#ff4500"/>
<rect x="1020" y="98" width="1" height="13" fill="#32cd32"/>
<rect x="1019" y="101" width="3" height="5" fill="#32cd32"/>
<rect x="1024" y="102" width="1" height="24" fill="#32cd32"/>
<rect x="1023" y="105" width="3" height="4" fill="#32cd32"/>
<rect x="1028" y="95" width="1" height="16" fill="#ff0000"/>
<rect x="1027" y="104" width="3" height="5" fill="#ff0000"/>
<rect x="1028" y="105" width="1" height="3" fill="#ff4500"/>
<rect x="1032" y="103" width="1" height="37" fill="#32cd32"/>
<rect x="1031" y="104" width="3" height="26" fill="#32cd32"/>
<rect x="1036" y="121" width="1" height="10" fill="#ff0000"/>
<rect x="1035" y="126" width="3" height="3" fill="#ff0000"/>
<rect x="1036" y="127" width="1" height="1" fill="#ff4500"/>
</g>
</g>
<rect x="3.5" y="30.5" width="1304" height="385" fill="none" stroke="#000" stroke-width="1" shape-rendering="crispEdges"/>
<path d="M7 41 L10.5 37 L14 41 Z" fill="#000"/>
<text transform="translate(18.50,42.20) scale(0.9150,1)" font-size="10.94" stroke="#000" stroke-width="0.15" fill="#000" >USDCHF,Daily</text>
<text transform="translate(89.52,42.20) scale(0.8528,1)" font-size="10.94" stroke="#000" stroke-width="0.15" fill="#000" >0.99182</text>
<text transform="translate(125.62,42.20) scale(0.8528,1)" font-size="10.94" stroke="#000" stroke-width="0.15" fill="#000" >0.99377</text>
<text transform="translate(161.62,42.20) scale(0.8504,1)" font-size="10.94" stroke="#000" stroke-width="0.15" fill="#000" >0.99145</text>
<text transform="translate(197.72,42.20) scale(0.8504,1)" font-size="10.94" stroke="#000" stroke-width="0.15" fill="#000" >0.99246</text>
<g shape-rendering="crispEdges">
<rect x="7" y="50" width="52" height="24" fill="url(#tabg)"/>
<rect x="174" y="50" width="52" height="24" fill="url(#tabg)"/>
<rect x="7" y="50" width="52" height="1" fill="#2a2ad0"/><rect x="174" y="50" width="52" height="1" fill="#2a2ad0"/>
<rect x="7" y="74" width="109" height="40" fill="url(#pang)"/>
<rect x="118" y="74" width="108" height="40" fill="url(#pang)"/>
<rect x="11" y="73" width="44" height="1" fill="#2020a0"/><rect x="11" y="74" width="44" height="1" fill="#7b7bf0"/>
<rect x="178" y="73" width="44" height="1" fill="#2020a0"/><rect x="178" y="74" width="44" height="1" fill="#7b7bf0"/>
<rect x="59" y="50" width="115" height="24" fill="#ffffff"/>
<rect x="61" y="50" width="111" height="22" fill="#a8a8a8"/>
<rect x="62" y="51" width="109" height="20" fill="#ffffff"/>
<rect x="63" y="52" width="19" height="18" fill="url(#btng)"/>
<rect x="82" y="51" width="1" height="20" fill="#a8a8a8"/>
<rect x="152" y="52" width="19" height="18" fill="url(#btng)"/>
<rect x="151" y="51" width="1" height="20" fill="#a8a8a8"/>
</g>
<path d="M69 59 H74.5 L71.75 62 Z" fill="#4a5ad0"/>
<path d="M158.5 62 H164 L161.25 59 Z" fill="#4a5ad0"/>
<text transform="translate(122.82,64.70) scale(1.0511,1)" font-size="11.94" stroke="#000" stroke-width="0.15" fill="#000" >3.00</text>
<text transform="translate(18.97,66.00) scale(0.8157,1)" font-size="13.24" stroke="#fff" stroke-width="0.15" fill="#fff" >SELL</text>
<text transform="translate(186.65,66.00) scale(0.9184,1)" font-size="12.95" stroke="#fff" stroke-width="0.15" fill="#fff" >BUY</text>
<text transform="translate(26.42,104.70) scale(1.0273,1)" font-size="12.37" font-weight="bold" fill="#fff" >0.99</text>
<text transform="translate(53.96,105.20) scale(0.8869,1)" font-size="34.82" fill="#fff" >24</text>
<text transform="translate(94.01,88.90) scale(1.1491,1)" font-size="11.37" font-weight="bold" fill="#fff" >6</text>
<text transform="translate(136.42,104.70) scale(1.0359,1)" font-size="12.37" font-weight="bold" fill="#fff" >0.99</text>
<text transform="translate(164.94,105.60) scale(0.9285,1)" font-size="35.68" fill="#fff" >28</text>
<text transform="translate(205.20,89.20) scale(1.0401,1)" font-size="12.95" font-weight="bold" fill="#fff" >0</text>
<g shape-rendering="crispEdges">
<line x1="5" y1="458.5" x2="1307" y2="458.5" stroke="#c0c0c0" stroke-width="1" stroke-dasharray="3,3"/>
<line x1="5" y1="511.5" x2="1307" y2="511.5" stroke="#c0c0c0" stroke-width="1" stroke-dasharray="3,3"/>
<rect x="1308" y="419" width="2" height="1" fill="#000"/>
<rect x="1308" y="550" width="2" height="1" fill="#000"/>
</g>
<polyline points="4,500.5 8,505.3 12,508.3 16,497.2 20,500.5 24,500.0 28,495.1 32,484.2 36,491.5 40,494.7 44,504.2 48,508.4 52,511.3 56,500.1 60,506.6 64,498.5 68,500.6 72,504.2 76,513.1 80,515.6 84,519.5 88,513.2 92,515.1 96,516.9 100,519.5 104,510.9 108,511.1 112,504.2 116,493.2 120,500.2 124,495.5 128,496.3 132,499.8 136,504.4 140,509.6 144,501.8 148,499.6 152,490.9 156,487.7 160,493.9 164,490.0 168,487.6 172,486.7 176,480.1 180,481.9 184,488.8 188,485.5 192,484.5 196,481.3 200,472.8 204,472.5 208,478.3 212,483.0 216,481.9 220,474.2 224,473.0 228,475.4 232,469.3 236,479.3 240,480.1 244,483.0 248,485.4 252,483.4 256,471.1 260,471.7 264,477.1 268,474.4 272,469.8 276,467.6 280,464.8 284,473.6 288,478.4 292,477.0 296,475.7 300,469.2 304,471.0 308,475.4 312,467.0 316,464.1 320,461.5 324,458.0 328,454.9 332,454.2 336,450.7 340,446.5 344,450.6 348,448.3 352,444.4 356,443.2 360,447.4 364,445.6 368,443.8 372,446.9 376,444.6 380,449.6 384,456.8 388,456.2 392,455.6 396,457.3 400,456.2 404,467.2 408,468.6 412,478.8 416,473.3 420,482.4 424,484.1 428,478.3 432,483.5 436,487.3 440,493.3 444,488.2 448,489.1 452,494.7 456,490.4 460,499.9 464,490.0 468,490.0 472,487.2 476,489.8 480,471.1 484,469.9 488,475.1 492,476.6 496,473.6 500,482.0 504,489.0 508,490.0 512,482.8 516,473.4 520,473.4 524,485.0 528,480.7 532,483.1 536,481.3 540,481.3 544,489.4 548,484.2 552,482.6 556,476.9 560,468.1 564,469.6 568,479.5 572,474.2 576,476.4 580,476.9 584,487.7 588,488.1 592,485.5 596,489.0 600,484.6 604,482.9 608,494.9 612,490.3 616,487.0 620,481.8 624,484.0 628,478.8 632,480.6 636,484.2 640,484.8 644,481.6 648,486.6 652,483.5 656,486.1 660,477.9 664,482.1 668,490.1 672,500.4 676,504.0 680,495.8 684,500.9 688,504.9 692,509.3 696,514.8 700,516.0 704,515.3 708,515.9 712,502.0 716,504.6 720,512.4 724,504.3 728,503.7 732,493.7 736,494.2 740,498.7 744,501.9 748,503.9 752,502.7 756,508.9 760,509.0 764,496.6 768,503.3 772,506.6 776,507.5 780,499.2 784,494.4 788,487.3 792,473.2 796,476.7 800,472.3 804,466.3 808,465.8 812,460.9 816,458.0 820,459.1 824,460.9 828,458.6 832,460.7 836,464.2 840,463.0 844,464.2 848,467.0 852,477.1 856,472.6 860,467.2 864,465.0 868,461.1 872,460.9 876,462.2 880,468.9 884,462.9 888,459.3 892,468.2 896,469.7 900,463.8 904,458.4 908,457.1 912,464.2 916,463.2 920,462.1 924,461.2 928,466.6 932,478.6 936,472.0 940,468.2 944,466.7 948,461.8 952,463.6 956,467.0 960,472.1 964,479.1 968,486.7 972,497.6 976,498.6 980,493.5 984,495.1 988,487.3 992,488.8 996,484.4 1000,484.1 1004,482.6 1008,492.0 1012,483.4 1016,482.7 1020,486.3 1024,488.5 1028,485.3 1032,499.7 1036,497.2" fill="none" stroke="#1e90ff" stroke-width="1" shape-rendering="crispEdges" clip-path="url(#rsiclip)"/>
<text transform="translate(7.35,430.20) scale(0.8817,1)" font-size="10.65" stroke="#000" stroke-width="0.15" fill="#000" >RSI(14) 39.9069</text>
<text transform="translate(1310.65,428.30) scale(0.9022,1)" font-size="10.22" stroke="#000" stroke-width="0.15" fill="#000" >100</text>
<text transform="translate(1309.71,462.20) scale(0.9539,1)" font-size="10.22" stroke="#000" stroke-width="0.15" fill="#000" >70</text>
<text transform="translate(1309.51,515.40) scale(0.8602,1)" font-size="11.22" stroke="#000" stroke-width="0.15" fill="#000" >30</text>
<text transform="translate(1310.47,548.00) scale(1.0942,1)" font-size="10.07" stroke="#000" stroke-width="0.15" fill="#000" >0</text>
<rect x="1307" y="458" width="1" height="1" fill="#fff" shape-rendering="crispEdges"/><rect x="1307" y="511" width="1" height="1" fill="#fff" shape-rendering="crispEdges"/>
<g shape-rendering="crispEdges">
<rect x="4" y="552" width="1" height="3" fill="#000"/>
<rect x="68" y="552" width="1" height="3" fill="#000"/>
<rect x="132" y="552" width="1" height="3" fill="#000"/>
<rect x="196" y="552" width="1" height="3" fill="#000"/>
<rect x="260" y="552" width="1" height="3" fill="#000"/>
<rect x="324" y="552" width="1" height="3" fill="#000"/>
<rect x="388" y="552" width="1" height="3" fill="#000"/>
<rect x="452" y="552" width="1" height="3" fill="#000"/>
<rect x="516" y="552" width="1" height="3" fill="#000"/>
<rect x="580" y="552" width="1" height="3" fill="#000"/>
<rect x="644" y="552" width="1" height="3" fill="#000"/>
<rect x="708" y="552" width="1" height="3" fill="#000"/>
<rect x="772" y="552" width="1" height="3" fill="#000"/>
<rect x="836" y="552" width="1" height="3" fill="#000"/>
<rect x="900" y="552" width="1" height="3" fill="#000"/>
<rect x="964" y="552" width="1" height="3" fill="#000"/>
<rect x="1028" y="552" width="1" height="3" fill="#000"/>
</g>
<text transform="translate(2.44,564.20) scale(0.8354,1)" font-size="11.08" stroke="#000" stroke-width="0.15" fill="#000" >28 Dec 2017</text>
<text transform="translate(66.44,564.20) scale(0.8356,1)" font-size="11.08" stroke="#000" stroke-width="0.15" fill="#000" >22 Jan 2018</text>
<text transform="translate(130.25,564.20) scale(0.8355,1)" font-size="11.08" stroke="#000" stroke-width="0.15" fill="#000" >13 Feb 2018</text>
<text transform="translate(194.44,564.20) scale(0.8362,1)" font-size="11.08" stroke="#000" stroke-width="0.15" fill="#000" >7 Mar 2018</text>
<text transform="translate(258.44,564.20) scale(0.8355,1)" font-size="11.08" stroke="#000" stroke-width="0.15" fill="#000" >29 Mar 2018</text>
<text transform="translate(322.44,564.20) scale(0.8357,1)" font-size="11.08" stroke="#000" stroke-width="0.15" fill="#000" >20 Apr 2018</text>
<text transform="translate(386.25,564.20) scale(0.8353,1)" font-size="11.08" stroke="#000" stroke-width="0.15" fill="#000" >14 May 2018</text>
<text transform="translate(450.53,564.20) scale(0.8364,1)" font-size="11.08" stroke="#000" stroke-width="0.15" fill="#000" >5 Jun 2018</text>
<text transform="translate(514.44,564.20) scale(0.8356,1)" font-size="11.08" stroke="#000" stroke-width="0.15" fill="#000" >27 Jun 2018</text>
<text transform="translate(578.25,564.20) scale(0.8361,1)" font-size="11.08" stroke="#000" stroke-width="0.15" fill="#000" >19 Jul 2018</text>
<text transform="translate(642.25,564.20) scale(0.8355,1)" font-size="11.08" stroke="#000" stroke-width="0.15" fill="#000" >10 Aug 2018</text>
<text transform="translate(706.62,564.20) scale(0.8361,1)" font-size="11.08" stroke="#000" stroke-width="0.15" fill="#000" >3 Sep 2018</text>
<text transform="translate(770.44,564.20) scale(0.8354,1)" font-size="11.08" stroke="#000" stroke-width="0.15" fill="#000" >21 Sep 2018</text>
<text transform="translate(834.25,564.20) scale(0.8357,1)" font-size="11.08" stroke="#000" stroke-width="0.15" fill="#000" >10 Oct 2018</text>
<text transform="translate(898.44,564.20) scale(0.8357,1)" font-size="11.08" stroke="#000" stroke-width="0.15" fill="#000" >29 Oct 2018</text>
<text transform="translate(962.25,564.20) scale(0.8355,1)" font-size="11.08" stroke="#000" stroke-width="0.15" fill="#000" >16 Nov 2018</text>
<text transform="translate(1026.53,564.20) scale(0.8361,1)" font-size="11.08" stroke="#000" stroke-width="0.15" fill="#000" >5 Dec 2018</text>
<g shape-rendering="crispEdges">
<rect x="0" y="572" width="1351" height="1" fill="#e3e3e3"/>
<rect x="0" y="574" width="1352" height="1" fill="#000"/>
<rect x="0" y="575" width="1352" height="19" fill="#f0f0f0"/>
<rect x="0" y="594" width="1352" height="1" fill="#ffffff"/>
<rect x="0" y="595" width="1352" height="3" fill="#f0f0f0"/>
<rect x="0" y="575" width="1" height="18" fill="#828282"/>
<rect x="1350" y="575" width="1" height="19" fill="#e3e3e3"/>
<rect x="97" y="574" width="100" height="19" fill="#000"/>
<rect x="98" y="574" width="98" height="18" fill="#ffffff"/>
<rect x="290" y="578" width="1" height="12" fill="#808080"/>
<rect x="382" y="578" width="1" height="12" fill="#808080"/>
<rect x="473" y="578" width="1" height="12" fill="#808080"/>
<rect x="557" y="578" width="1" height="12" fill="#808080"/>
</g>
<text transform="translate(16.25,588.90) scale(0.9115,1)" font-size="13.09" stroke="#6d6d6d" stroke-width="0.15" fill="#6d6d6d" >EURUSD,H4</text>
<text transform="translate(106.35,588.90) scale(0.9302,1)" font-size="13.09" stroke="#000" stroke-width="0.15" fill="#000" >USDCHF,Daily</text>
<text transform="translate(207.76,588.90) scale(0.9126,1)" font-size="13.09" stroke="#6d6d6d" stroke-width="0.15" fill="#6d6d6d" >USDCAD,H4</text>
<text transform="translate(299.80,588.90) scale(0.9346,1)" font-size="13.09" stroke="#6d6d6d" stroke-width="0.15" fill="#6d6d6d" >AUDUSD,H4</text>
<text transform="translate(389.93,588.90) scale(0.9464,1)" font-size="13.09" stroke="#6d6d6d" stroke-width="0.15" fill="#6d6d6d" >USDCNH,H4</text>
<text transform="translate(482.37,588.90) scale(0.9081,1)" font-size="13.09" stroke="#6d6d6d" stroke-width="0.15" fill="#6d6d6d" >USDJPY,H1</text>
<path d="M1323 580 V586 L1320 583 Z" fill="#a0a0a0"/>
<path d="M1339 580 V586 L1342 583 Z" fill="#a0a0a0"/>
</svg></body></html>
